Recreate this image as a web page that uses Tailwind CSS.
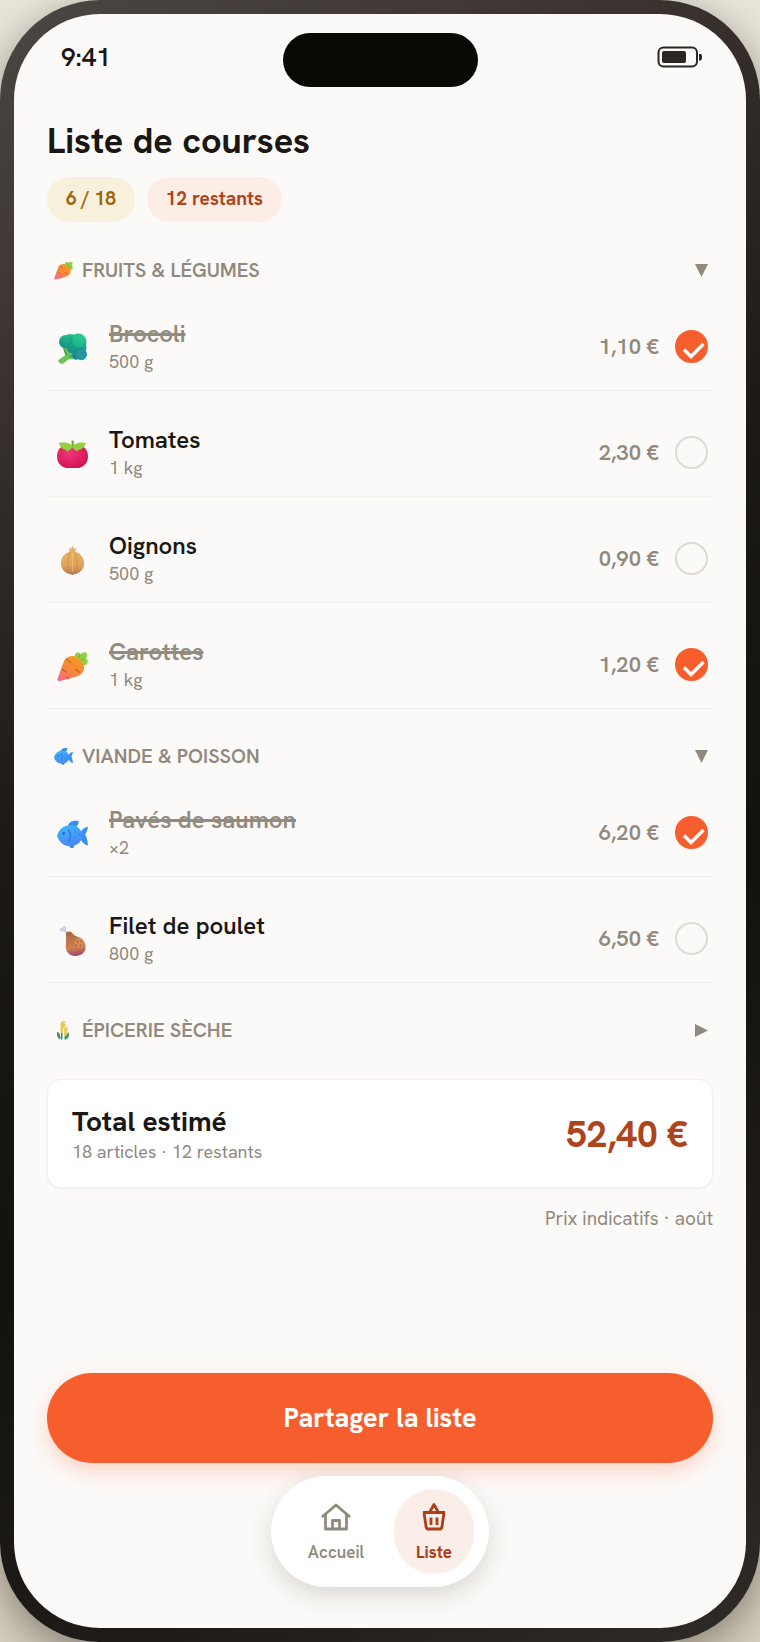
<!DOCTYPE html>
<html lang="fr">
<head>
    <meta charset="UTF-8">
    <meta name="viewport" content="width=device-width, initial-scale=1.0">
    <title>Liste de courses</title>
    <script src="https://cdn.jsdelivr.net/npm/@tailwindcss/browser@4"></script>
</head>
<body class="min-h-screen flex flex-col bg-linear-to-b from-[#e8e5da] to-[#d6d0c2] font-['Hanken_Grotesk','Roboto',sans-serif] text-[#1a1714]">

<!-- Icons -->
<svg class="absolute w-0 h-0" aria-hidden="true">
    <defs>
        <linearGradient id="carrotFill" x1="0.8" y1="0.1" x2="0.3" y2="1">
            <stop offset="0" stop-color="#f59a23"/>
            <stop offset="0.6" stop-color="#f5853f"/>
            <stop offset="1" stop-color="#fb6a86"/>
        </linearGradient>
        <linearGradient id="broccoliFill" gradientUnits="userSpaceOnUse" x1="22" y1="1" x2="14" y2="26">
            <stop offset="0" stop-color="#25c98a"/>
            <stop offset="0.5" stop-color="#1a9f88"/>
            <stop offset="1" stop-color="#17808f"/>
        </linearGradient>
        <radialGradient id="tomatoFill" cx="0.4" cy="0.35" r="0.7">
            <stop offset="0" stop-color="#f0357a"/>
            <stop offset="0.7" stop-color="#dc1f5c"/>
            <stop offset="1" stop-color="#c2184c"/>
        </radialGradient>
        <linearGradient id="onionFill" x1="0.5" y1="0" x2="0.5" y2="1">
            <stop offset="0" stop-color="#ecb768"/>
            <stop offset="0.7" stop-color="#dfa25a"/>
            <stop offset="1" stop-color="#b3705a"/>
        </linearGradient>
        <linearGradient id="fishFill" x1="0.2" y1="0" x2="0.6" y2="1">
            <stop offset="0" stop-color="#3fb8fa"/>
            <stop offset="1" stop-color="#4a86f7"/>
        </linearGradient>
        <linearGradient id="legFill" x1="0.5" y1="0" x2="0.6" y2="1">
            <stop offset="0" stop-color="#a9683f"/>
            <stop offset="0.65" stop-color="#cf8050"/>
            <stop offset="1" stop-color="#9c3f72"/>
        </linearGradient>
    </defs>
    <symbol id="carrot" viewBox="0 0 32 32">
        <path d="M21 12c-3-3-4-8-1-10 2-1 4 0 4.500 1.500C26 1 30 .5 31 3c.8 2-.2 3.500-1.500 4.500C32 8.500 32.500 12 30.500 14c-2 2-6 1-9.500-2z" fill="#8bd142"/>
        <path d="M20 12l4-8M21 12l7-4" stroke="#64b63a" stroke-width="1"/>
        <path d="M7.500 9.500C11 4.500 18 3.500 23 8c5 4.500 6.500 10 3.500 14-2 2.800-5 4.200-9 5.200L3 31c-1.800.5-2.800-.6-2.400-2.500z" fill="url(#carrotFill)"/>
        <path d="M10 8.500l4 3.500M5.500 19l4 2.500M19 19l4.500 3M10 27l2 1.500" stroke="#c8682c" stroke-width="1.400" stroke-linecap="round" fill="none"/>
    </symbol>
    <symbol id="broccoli" viewBox="0 0 32 32">
        <path d="M6 15l2.500 8-6.500 4.500c-1.500 1-.5 2.500.5 3.300 1.500 1.500 3.500 1.500 5 0L12 27l9 0-3-9z" fill="#6cc558"/>
        <path d="M7.500 17l2.500 6M19 20l-6 5" stroke="#3b9f55" stroke-width="1.500" fill="none"/>
        <g fill="url(#broccoliFill)">
            <circle cx="9" cy="9" r="7"/>
            <circle cx="14" cy="9" r="8"/>
            <circle cx="22" cy="9" r="8.500"/>
            <circle cx="23" cy="15" r="7.500"/>
            <circle cx="16" cy="15" r="6"/>
            <circle cx="20" cy="23" r="4.500"/>
        </g>
        <circle cx="25" cy="22" r="6" fill="#2794a0"/>
        <circle cx="23" cy="8" r="6.500" fill="#2bd191" opacity="0.350"/>
        <path d="M15 4c-2 2-2 5 0 7M19 21c1-3 3-5 7-5" stroke="#11777f" stroke-width="0.900" fill="none" opacity="0.600"/>
    </symbol>
    <symbol id="tomato" viewBox="0 0 32 32">
        <path d="M16 7c9-3 16 2 16 11 0 7-5 12-12 12h-8C5 30 0 25 0 18 0 9 7 4 16 7z" fill="url(#tomatoFill)"/>
        <path d="M15 1.500h2.500l.2 4.500c4-3 8-2.500 12-2-1 5-5 7-8 7l-1 2-5-4-5 4.500-1.500-2.500C6 11 3 8 2 4c4-.8 9-.8 13 2z" fill="#93d13c"/>
        <path d="M16 2v6" stroke="#5fae35" stroke-width="1.200"/>
    </symbol>
    <symbol id="onion" viewBox="0 0 32 32">
        <path d="M13 7l-1-4 2 1 2-3 2 3 2-1-1 4c5 1.500 9 6 9 12 0 6-5 10-9.500 11L16 31l-2.500-1C9 29 4 25 4 19 4 13 8 8.500 13 7z" fill="url(#onionFill)"/>
        <path d="M14 8c-3 5-5 14 0 21M18 8c3 5 5 14 0 21" stroke="#c98d49" stroke-width="0.800" fill="none"/>
        <path d="M16 8v20" stroke="#f3ca83" stroke-width="1.200" opacity="0.600"/>
    </symbol>
    <symbol id="fish" viewBox="0 0 32 32">
        <path d="M11 8c1-5 5-7 11.500-6 0 2-1 5-3.500 7zM12 27h6l-1 3h-3z" fill="#3690ec"/>
        <path d="M24 16c1-4 3-7 8-8-.5 3-1.500 6-3 8 1.500 2 2.500 6 3 11-4 0-7-4-8-8z" fill="#3c8ff2"/>
        <path d="M0 17.500C2 10 8 6 14 6.500c6 0 10 3 12 8.500v4c-1.500 5-6 9-12 9C8 28 3 25.500 0 17.500z" fill="url(#fishFill)"/>
        <path d="M11.500 11c3 3 3.500 8 .5 12" stroke="#2c72d8" stroke-width="1.300" stroke-linecap="round" fill="none"/>
        <path d="M18 12l1.500 2M18 18l1.500 2M22 15l1.500 2" stroke="#3a7fe6" stroke-width="1" stroke-linecap="round"/>
        <circle cx="7" cy="15" r="1.200" fill="#204f9e"/>
    </symbol>
    <symbol id="leg" viewBox="0 0 32 32">
        <path d="M11 10L7 6.500c-2 1.500-5 0-4-2 0-1.500 1.500-1.500 2.500-1.300C5.500 1 8 0 9 2c.7 1.200.3 2.200 0 3l4 4z" fill="#d8cdec"/>
        <path d="M9 9c1-2 4-3 6-1.500 2 3 4.500 4 8 5.500 5 2.500 7 6.500 6.500 11C29 29 24 32 19 32c-6 0-10-4-10-10 0-4 1-9 0-13z" fill="url(#legFill)"/>
        <circle cx="23" cy="18" r="5" fill="#e69a62" opacity="0.500"/>
        <path d="M21 17.500h.1M25 17h.1M24 21h.1M20 21h.1" stroke="#a05636" stroke-width="1.500" stroke-linecap="round"/>
    </symbol>
    <symbol id="wheat" viewBox="0 0 32 32">
        <path d="M10 31C6 29 5 26 5 22v-4c4 1 6 5 6 12zM20 31c-1-6 1-10 5-12v6c0 3-2 5-5 6z" fill="#4c9170"/>
        <path d="M13 31V14M19 31V16" stroke="#3d8a80" stroke-width="2.500"/>
        <path d="M11 20V4c2-4 5-4 9-3-1 2-3 3-5 3 3 0 5 0 6 1-2 3-4 3-6 3 2 0 4 0 5 1-2 3-3 3-5 3v8z" fill="#ecc64f"/>
        <path d="M17 26V12c2-2 4-2 7-1-1 3-3 3-5 3 2 0 4 0 5 1-1 3-3 3-5 3 2 0 3 0 4 1-1 3-2 5-4 7z" fill="#e9d05e"/>
    </symbol>
</svg>

<div class="flex-1 flex flex-col rounded-[100px] p-[14px] bg-linear-[150deg,#4c4743_0%,#3d3532_16%,#1b1815_42%,#12110d_62%,#211d1b_85%,#2f2b26_100%] shadow-[0_12px_40px_rgba(60,50,35,0.5)]">
    <div class="flex-1 flex flex-col rounded-[86px] bg-[#fcfaf8] px-[33px] pb-[41px]">

        <div class="grid grid-cols-3 items-start pt-[19px]">
            <span class="pl-[14px] pt-2 text-[26px] leading-8 font-semibold">9:41</span>
            <div class="justify-self-center w-[195px] h-[54px] rounded-full bg-[#0a0906]"></div>
            <svg class="justify-self-end mt-3 mr-[10px] w-[46px] h-[24px]" viewBox="0 0 46 24" role="img" aria-label="Batterie">
                <rect x="1.500" y="2.500" width="38.500" height="19" rx="5" fill="none" stroke="#2a2621" stroke-width="2"/>
                <rect x="5" y="6" width="24" height="12" rx="2" fill="#2a2621"/>
                <path d="M42 9h1.500c1 0 1.500 1 1.500 3s-.5 3.500-1.500 3.500H42z" fill="#2a2621"/>
            </svg>
        </div>

        <header class="pt-[31px]">
            <h1 class="text-[36px] leading-[46px] font-bold">Liste de courses</h1>
            <div class="flex gap-3 mt-[13px]">
                <span class="flex items-center h-[45px] px-[19px] rounded-full bg-[#f7f1dc] text-[19px] font-bold text-[#a0650a]">6 / 18</span>
                <span class="flex items-center h-[45px] px-[19px] rounded-full bg-[#fdede7] text-[19px] font-bold text-[#ae441b]">12 restants</span>
            </div>
        </header>

        <main>
            <section class="mt-[35px]">
                <button type="button" aria-expanded="true" aria-controls="fruits" class="toggle group w-full h-[26px] flex items-center gap-[9px] pl-[7px] pr-[5px] text-[#90897e] cursor-pointer">
                    <svg class="w-[19px] h-[19px]" aria-hidden="true"><use href="#carrot"/></svg>
                    <span class="text-[20px] font-semibold">FRUITS &amp; LÉGUMES</span>
                    <svg class="ml-auto w-[13px] h-[13px] -rotate-90 group-aria-expanded:rotate-0" viewBox="0 0 12 12" fill="currentColor" aria-hidden="true"><path d="M0 0h12L6 12z"/></svg>
                </button>
                <ul id="fruits" class="flex flex-col gap-[18px] mt-5">
                    <li class="h-[88px] flex items-center border-b border-[#f1eeea] pl-[10px] pr-[5px]">
                        <svg class="mt-1 w-[31px] h-[31px]" aria-hidden="true"><use href="#broccoli"/></svg>
                        <div class="ml-[21px]">
                            <label for="brocoli" class="block text-[24px] leading-[30px] font-semibold text-[#928b80] line-through decoration-3">Brocoli</label>
                            <p class="text-[18px] leading-[26px] text-[#90897e]">500 g</p>
                        </div>
                        <span class="ml-auto mr-4 text-[22px] font-semibold text-[#90897e]">1,10 €</span>
                        <span class="grid">
                            <input id="brocoli" type="checkbox" checked class="peer col-start-1 row-start-1 appearance-none w-[33px] h-[33px] rounded-full border-2 border-[#dedad2] checked:border-[#f75e2d] checked:bg-[#f75e2d]">
                            <svg class="col-start-1 row-start-1 w-[33px] h-[33px] pointer-events-none opacity-0 peer-checked:opacity-100" viewBox="0 0 33 33" aria-hidden="true"><path d="M9 19.500l7 7 12.500-12.500" fill="none" stroke="#fff" stroke-width="3.400"/></svg>
                        </span>
                    </li>
                    <li class="h-[88px] flex items-center border-b border-[#f1eeea] pl-[10px] pr-[5px]">
                        <svg class="mt-1 w-[31px] h-[31px]" aria-hidden="true"><use href="#tomato"/></svg>
                        <div class="ml-[21px]">
                            <label for="tomates" class="block text-[24px] leading-[30px] font-semibold">Tomates</label>
                            <p class="text-[18px] leading-[26px] text-[#90897e]">1 kg</p>
                        </div>
                        <span class="ml-auto mr-4 text-[22px] font-semibold text-[#90897e]">2,30 €</span>
                        <span class="grid">
                            <input id="tomates" type="checkbox" class="peer col-start-1 row-start-1 appearance-none w-[33px] h-[33px] rounded-full border-2 border-[#dedad2] checked:border-[#f75e2d] checked:bg-[#f75e2d]">
                            <svg class="col-start-1 row-start-1 w-[33px] h-[33px] pointer-events-none opacity-0 peer-checked:opacity-100" viewBox="0 0 33 33" aria-hidden="true"><path d="M9 19.500l7 7 12.500-12.500" fill="none" stroke="#fff" stroke-width="3.400"/></svg>
                        </span>
                    </li>
                    <li class="h-[88px] flex items-center border-b border-[#f1eeea] pl-[10px] pr-[5px]">
                        <svg class="mt-1 w-[31px] h-[31px]" aria-hidden="true"><use href="#onion"/></svg>
                        <div class="ml-[21px]">
                            <label for="oignons" class="block text-[24px] leading-[30px] font-semibold">Oignons</label>
                            <p class="text-[18px] leading-[26px] text-[#90897e]">500 g</p>
                        </div>
                        <span class="ml-auto mr-4 text-[22px] font-semibold text-[#90897e]">0,90 €</span>
                        <span class="grid">
                            <input id="oignons" type="checkbox" class="peer col-start-1 row-start-1 appearance-none w-[33px] h-[33px] rounded-full border-2 border-[#dedad2] checked:border-[#f75e2d] checked:bg-[#f75e2d]">
                            <svg class="col-start-1 row-start-1 w-[33px] h-[33px] pointer-events-none opacity-0 peer-checked:opacity-100" viewBox="0 0 33 33" aria-hidden="true"><path d="M9 19.500l7 7 12.500-12.500" fill="none" stroke="#fff" stroke-width="3.400"/></svg>
                        </span>
                    </li>
                    <li class="h-[88px] flex items-center border-b border-[#f1eeea] pl-[10px] pr-[5px]">
                        <svg class="mt-1 w-[31px] h-[31px]" aria-hidden="true"><use href="#carrot"/></svg>
                        <div class="ml-[21px]">
                            <label for="carottes" class="block text-[24px] leading-[30px] font-semibold text-[#928b80] line-through decoration-3">Carottes</label>
                            <p class="text-[18px] leading-[26px] text-[#90897e]">1 kg</p>
                        </div>
                        <span class="ml-auto mr-4 text-[22px] font-semibold text-[#90897e]">1,20 €</span>
                        <span class="grid">
                            <input id="carottes" type="checkbox" checked class="peer col-start-1 row-start-1 appearance-none w-[33px] h-[33px] rounded-full border-2 border-[#dedad2] checked:border-[#f75e2d] checked:bg-[#f75e2d]">
                            <svg class="col-start-1 row-start-1 w-[33px] h-[33px] pointer-events-none opacity-0 peer-checked:opacity-100" viewBox="0 0 33 33" aria-hidden="true"><path d="M9 19.500l7 7 12.500-12.500" fill="none" stroke="#fff" stroke-width="3.400"/></svg>
                        </span>
                    </li>
                </ul>
            </section>

            <section class="mt-[34px]">
                <button type="button" aria-expanded="true" aria-controls="viande" class="toggle group w-full h-[26px] flex items-center gap-[9px] pl-[7px] pr-[5px] text-[#90897e] cursor-pointer">
                    <svg class="w-[19px] h-[19px]" aria-hidden="true"><use href="#fish"/></svg>
                    <span class="text-[20px] font-semibold">VIANDE &amp; POISSON</span>
                    <svg class="ml-auto w-[13px] h-[13px] -rotate-90 group-aria-expanded:rotate-0" viewBox="0 0 12 12" fill="currentColor" aria-hidden="true"><path d="M0 0h12L6 12z"/></svg>
                </button>
                <ul id="viande" class="flex flex-col gap-[18px] mt-5">
                    <li class="h-[88px] flex items-center border-b border-[#f1eeea] pl-[10px] pr-[5px]">
                        <svg class="mt-1 w-[31px] h-[31px]" aria-hidden="true"><use href="#fish"/></svg>
                        <div class="ml-[21px]">
                            <label for="saumon" class="block text-[24px] leading-[30px] font-semibold text-[#928b80] line-through decoration-3">Pavés de saumon</label>
                            <p class="text-[18px] leading-[26px] text-[#90897e]">×2</p>
                        </div>
                        <span class="ml-auto mr-4 text-[22px] font-semibold text-[#90897e]">6,20 €</span>
                        <span class="grid">
                            <input id="saumon" type="checkbox" checked class="peer col-start-1 row-start-1 appearance-none w-[33px] h-[33px] rounded-full border-2 border-[#dedad2] checked:border-[#f75e2d] checked:bg-[#f75e2d]">
                            <svg class="col-start-1 row-start-1 w-[33px] h-[33px] pointer-events-none opacity-0 peer-checked:opacity-100" viewBox="0 0 33 33" aria-hidden="true"><path d="M9 19.500l7 7 12.500-12.500" fill="none" stroke="#fff" stroke-width="3.400"/></svg>
                        </span>
                    </li>
                    <li class="h-[88px] flex items-center border-b border-[#f1eeea] pl-[10px] pr-[5px]">
                        <svg class="mt-1 w-[31px] h-[31px]" aria-hidden="true"><use href="#leg"/></svg>
                        <div class="ml-[21px]">
                            <label for="poulet" class="block text-[24px] leading-[30px] font-semibold">Filet de poulet</label>
                            <p class="text-[18px] leading-[26px] text-[#90897e]">800 g</p>
                        </div>
                        <span class="ml-auto mr-4 text-[22px] font-semibold text-[#90897e]">6,50 €</span>
                        <span class="grid">
                            <input id="poulet" type="checkbox" class="peer col-start-1 row-start-1 appearance-none w-[33px] h-[33px] rounded-full border-2 border-[#dedad2] checked:border-[#f75e2d] checked:bg-[#f75e2d]">
                            <svg class="col-start-1 row-start-1 w-[33px] h-[33px] pointer-events-none opacity-0 peer-checked:opacity-100" viewBox="0 0 33 33" aria-hidden="true"><path d="M9 19.500l7 7 12.500-12.500" fill="none" stroke="#fff" stroke-width="3.400"/></svg>
                        </span>
                    </li>
                </ul>
            </section>

            <section class="mt-[34px]">
                <button type="button" aria-expanded="false" class="toggle group w-full h-[26px] flex items-center gap-[9px] pl-[7px] pr-[5px] text-[#90897e] cursor-pointer">
                    <svg class="w-[19px] h-[19px]" aria-hidden="true"><use href="#wheat"/></svg>
                    <span class="text-[20px] font-semibold">ÉPICERIE SÈCHE</span>
                    <svg class="ml-auto w-[13px] h-[13px] -rotate-90 group-aria-expanded:rotate-0" viewBox="0 0 12 12" fill="currentColor" aria-hidden="true"><path d="M0 0h12L6 12z"/></svg>
                </button>
            </section>

            <div class="flex items-center justify-between mt-9 h-[109px] px-6 rounded-[14px] border border-[#f3f0ec] bg-white shadow-xs shadow-black/5">
                <div>
                    <p class="text-[28px] leading-9 font-bold">Total estimé</p>
                    <p class="text-[18px] leading-[26px] text-[#90897e]">18 articles · 12 restants</p>
                </div>
                <p class="text-[37px] leading-[46px] font-bold text-[#ae441b]">52,40 €</p>
            </div>
            <p class="mt-[18px] text-right text-[19px] leading-[26px] text-[#90897e]">Prix indicatifs · août</p>
        </main>

        <button type="button" class="mt-auto h-[90px] rounded-full bg-[#f75e2d] text-[27px] font-bold text-white shadow-[0_8px_20px_rgba(247,94,45,0.25)] cursor-pointer">Partager la liste</button>

        <nav class="relative self-center flex gap-2 mt-[13px] px-[15px] py-[13px] rounded-full bg-white shadow-[0_8px_24px_rgba(40,30,20,0.16)]">
            <a href="#" class="flex flex-col items-center justify-center w-[100px] h-[85px] gap-2 text-[#90897e]">
                <svg class="w-8 h-8" viewBox="0 0 32 32" fill="none" stroke="currentColor" stroke-width="2.800" aria-hidden="true">
                    <path d="M2 17L16 5l14 12M5.500 14.500V29h21V14.500M12.500 29v-8.500h7V29" stroke-linejoin="round"/>
                </svg>
                <span class="text-[17px] leading-6 font-semibold">Accueil</span>
            </a>
            <a href="#" aria-current="page" class="flex flex-col items-center justify-center w-[80px] h-[85px] gap-2 rounded-full bg-[#fbede7] text-[#a9401a]">
                <svg class="w-8 h-8" viewBox="0 0 32 32" fill="none" stroke="currentColor" stroke-width="2.800" stroke-linejoin="round" aria-hidden="true">
                    <path d="M5 12.500h22M6 12.500l2 14c.2 1.500 1 2.500 2.200 2.500h11.600c1.200 0 2-1 2.200-2.500l2-14M11.500 12.500L16 4.500l4.500 8M13 17.500v7.500M19 17.500v7.500"/>
                </svg>
                <span class="text-[17px] leading-6 font-bold">Liste</span>
            </a>
        </nav>
    </div>
</div>

<script>
    document.querySelectorAll('.toggle').forEach((button) => {
        button.addEventListener('click', () => {
            const open = button.getAttribute('aria-expanded') === 'true';
            button.setAttribute('aria-expanded', String(!open));
            const list = document.getElementById(button.getAttribute('aria-controls'));
            if (list) {
                list.classList.toggle('hidden', open);
            }
        });
    });

    // ticking an item strikes its name through
    document.querySelectorAll('input[type=checkbox]').forEach((input) => {
        input.addEventListener('change', () => {
            const label = document.querySelector(`label[for=${input.id}]`);
            ['line-through', 'decoration-3', 'text-[#928b80]'].forEach((name) => label.classList.toggle(name, input.checked));
        });
    });
</script>
</body>
</html>
